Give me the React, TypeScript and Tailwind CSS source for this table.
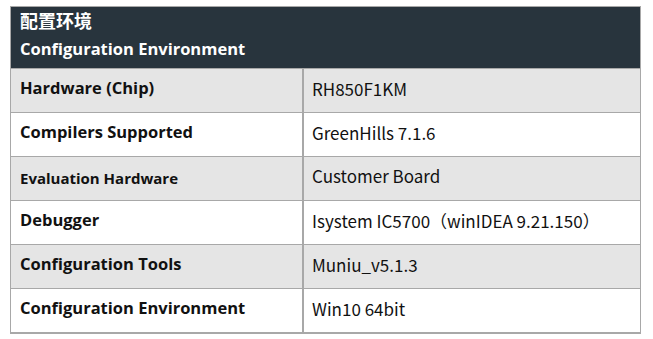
import React from 'react';

const rows: { label: string; value: string; small?: boolean }[] = [
  { label: 'Hardware (Chip)', value: 'RH850F1KM' },
  { label: 'Compilers Supported', value: 'GreenHills 7.1.6' },
  { label: 'Evaluation Hardware', value: 'Customer Board', small: true },
  { label: 'Debugger', value: 'Isystem IC5700（winIDEA 9.21.150）' },
  { label: 'Configuration Tools', value: 'Muniu_v5.1.3' },
  { label: 'Configuration Environment', value: 'Win10 64bit' },
];

const App: React.FC = () => {
  return (
    <div className="w-[653px] h-[339px] bg-white pt-[6px] pl-[10px]">
      <div className="w-[631px] border border-[#a8a8a8] border-b-2">
        {/* header */}
        <div className="h-[61px] bg-[#28343d] pl-[9px] text-white font-bold font-['Open_Sans','Noto_Sans_CJK_SC',sans-serif] text-[16.5px] flex flex-col">
          <div className="h-[27px] flex items-center text-[18px] font-['Noto_Sans_CJK_SC',sans-serif]">配置环境</div>
          <div className="h-[30px] flex items-center">Configuration Environment</div>
        </div>
        {rows.map((r, i) => (
          <div
            key={r.label}
            className={`flex h-[44px] border-t border-[#a8a8a8] ${i % 2 === 0 ? 'bg-[#e5e5e5]' : 'bg-white'}`}
          >
            <div
              className={`w-[291px] pl-[9px] flex items-center font-bold text-[#111] font-['Open_Sans',sans-serif] ${r.small ? 'text-[15px] pb-[1px]' : 'text-[16.5px] pb-[5px]'}`}
            >
              {r.label}
            </div>
            <div className="w-[2px] bg-[#a8a8a8]" />
            <div
              className={`flex-1 pl-[8px] flex items-center text-[17px] text-[#111] font-['Noto_Sans_CJK_SC',sans-serif] ${r.small ? 'pb-[5px]' : 'pb-[3px]'}`}
            >
              {r.value}
            </div>
          </div>
        ))}
      </div>
    </div>
  );
};

export default App;
